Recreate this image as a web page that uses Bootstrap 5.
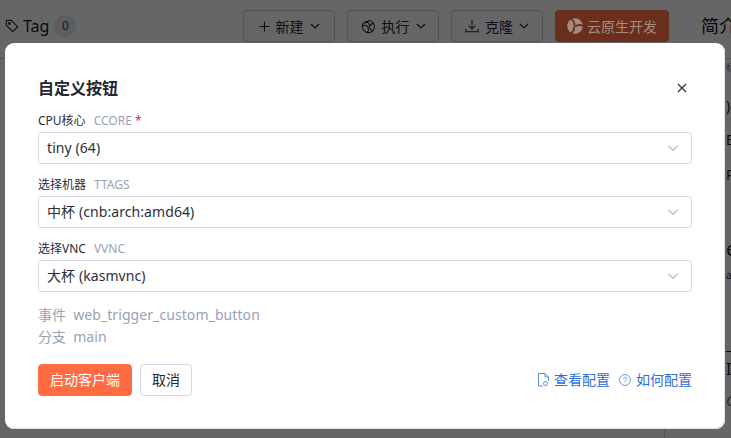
<!doctype html>
<html lang="zh"><head><meta charset="utf-8">
<link href="https://cdn.jsdelivr.net/npm/bootstrap@5.3.0/dist/css/bootstrap.min.css" rel="stylesheet">
<style>
html,body{height:100%;overflow:hidden}
body{font-family:"Noto Sans","Noto Sans CJK SC",sans-serif;background:#fff;color:#1f2328;width:731px;height:438px;position:relative}
.under{height:438px;position:relative;overflow:hidden}
.top-row{height:42px;padding:10px 0 0 5px}
.tag-title{font-size:16px;line-height:32px;color:#111827;width:238px;flex:none}
.tag-count{width:22px;height:22px;border-radius:50%;background:#e3e8f2;font-size:12px;color:#39435a;margin-left:5px}
.bg-btn{height:32px;width:92px;flex:none;font-size:14px;border:1px solid #c9cfdc;border-radius:4px;background:#fff;color:#1f2937;margin-right:12px;gap:6px;white-space:nowrap}
.bg-cloud{width:114px;background:#6a2e1c;border-color:#6a2e1c;color:#a58b80;position:relative;z-index:2;margin-right:0;gap:4px}
.side-h{font-size:18px;color:#111827;margin-left:32px;white-space:nowrap;flex:none}
.side-frags{position:absolute;left:726px;top:60px;width:5px;overflow:hidden;color:#222;font-size:14px}
.side-frags div{white-space:nowrap}
.frag-a{height:34px;font-size:9px;line-height:16px;color:#666}
.frag-b{height:34px;line-height:24px}
.frag-c{height:34px;line-height:24px}
.frag-d{height:72px;line-height:26px}
.frag-e{height:34px;font-size:20px;line-height:30px}
.frag-f{height:83px;font-size:10px;line-height:14px}
.frag-g{height:38px;border-top:1px solid #222;font-size:16px;line-height:20px;padding-top:7px}
.frag-h{height:24px;font-style:italic;color:#666;line-height:24px}
.rule{position:absolute;left:0;right:0;top:58px;border-top:1px solid #cfd5e2}
.vrule{position:absolute;left:664px;top:300px;bottom:0;border-left:1px solid #cfd5e2}
.shade{position:absolute;inset:0;background:rgba(0,0,0,.6);z-index:1}
.dlg{position:absolute;z-index:3;left:5px;top:43px;width:720px;height:386px;background:#fff;border-radius:9px;padding:33px 33px 0;box-shadow:inset -1px -1px 0 #dde1ea}
.dlg-title{font-size:16px;font-weight:600;line-height:24px;color:#23272f;margin:0 0 10px}
.closer{position:absolute;right:37px;top:39px;width:12px;height:12px;padding:0;border:0;background:none;display:flex}
.fld{margin-bottom:10px}
.fld-label{font-size:12px;line-height:22px;height:20px;color:#2a2f3a;margin-bottom:2px;display:block}
.fld-key{color:#9aa3b5;margin-left:8px}
.fld-req{color:#e0245e}
.fld-sel{height:32px;border:1px solid #d3d9e8;border-radius:4px;font-size:14px;letter-spacing:.08px;padding:0 8px;color:#2a2f3a;background:#fff}
.fld-sel span{margin-bottom:2px}
.meta{font-size:14px;line-height:22px;color:#98a2b6;margin-top:12px;letter-spacing:.08px}
.meta span{margin-right:7px}
.foot{margin-top:16px;height:32px}
.go{height:32px;width:94px;padding:0 0 2px;font-size:14px;background:#ff6b43;border:1px solid #ff6b43;color:#fff;border-radius:4px}
.no{height:32px;width:52px;padding:0 0 2px;font-size:14px;background:#fff;border:1px solid #d3d9e8;color:#23272f;border-radius:4px;margin-left:8px}
.lnk{font-size:14px;color:#2f6fd8;text-decoration:none;line-height:20px;gap:5px;margin-left:9px}
</style></head><body>
<div class="under">
  <div class="d-flex align-items-center top-row">
    <div class="tag-title d-flex align-items-center">
      <svg width="14" height="14" viewBox="0 0 16 16" fill="none" stroke="#1f2937" stroke-width="1.3" class="me-1"><path d="M1.500 2v5.200l7.300 7.300 5.700-5.700-7.300-7.300H2z"/><circle cx="5" cy="5.200" r="1"/></svg>
      Tag<span class="tag-count d-inline-flex align-items-center justify-content-center">0</span>
    </div>
    <div class="bg-btn d-flex align-items-center justify-content-center"><svg width="11" height="11" viewBox="0 0 11 11" fill="none" stroke="currentColor" stroke-width="1.200"><path d="M5.500 .5v10M.5 5.500h10"/></svg>新建<svg width="10" height="10" viewBox="0 0 10 10" fill="none" stroke="currentColor" stroke-width="1.200"><path d="M1 3l4 4 4-4"/></svg></div>
    <div class="bg-btn d-flex align-items-center justify-content-center">
      <svg width="15" height="15" viewBox="0 0 16 16" fill="none" stroke="currentColor" stroke-width="1.100"><path d="M8 1.500a6.500 6.500 0 1 1-5 2.300M4 2.500c3 0 5 2 5 5s2 5 4 5M2 7c3-1 6 1 6 4s-1 3-2 3.500M8 1.500c-1 2-3 3-5 2.300M9 7.500c1.500-1 3-2 3.500-3.500"/></svg>
      执行<svg width="10" height="10" viewBox="0 0 10 10" fill="none" stroke="currentColor" stroke-width="1.200"><path d="M1 3l4 4 4-4"/></svg></div>
    <div class="bg-btn d-flex align-items-center justify-content-center">
      <svg width="14" height="14" viewBox="0 0 16 16" fill="none" stroke="currentColor" stroke-width="1.200"><path d="M8 1v10M4 7.500l4 4 4-4M1 11v3.500h14V11"/></svg>
      克隆<svg width="10" height="10" viewBox="0 0 10 10" fill="none" stroke="currentColor" stroke-width="1.200"><path d="M1 3l4 4 4-4"/></svg></div>
    <div class="bg-btn bg-cloud d-flex align-items-center justify-content-center">
      <svg width="16" height="16" viewBox="0 0 16 16"><circle cx="8" cy="8" r="7.800" fill="#a58b80"/><path d="M7.500 7.500C7.500 4.500 6 2 3.500 1M8 8.500c2.500-1.500 5.500-2 7.800-.5M7 8.500c.5 3-1 5.500-3.500 7" stroke="#6a2e1c" stroke-width="1.800" fill="none"/></svg>
      云原生开发</div>
    <div class="side-h">简介</div>
  </div>
  <div class="rule"></div>
  <div class="vrule"></div>
  <div class="side-frags">
    <div class="frag-a">标</div><div class="frag-b">)</div><div class="frag-c">B</div><div class="frag-d">R</div><div class="frag-e">e</div><div class="frag-f">as</div><div class="frag-g">IP</div><div class="frag-h">C</div>
  </div>
  <div class="shade"></div>
  <div class="dlg">
    <h5 class="dlg-title">自定义按钮</h5>
    <button class="closer" type="button" aria-label="关闭"><svg width="12" height="12" viewBox="0 0 12 12" fill="none" stroke="#333" stroke-width="1.300"><path d="M2 2l8 8M10 2l-8 8"/></svg></button>
    <div class="fld">
      <label class="fld-label">CPU核心<span class="fld-key">CCORE</span> <span class="fld-req">*</span></label>
      <div class="fld-sel d-flex justify-content-between align-items-center"><span>tiny (64)</span><svg width="12" height="12" viewBox="0 0 12 12" fill="none" stroke="#b3b9c6" stroke-width="1.200" class="me-1"><path d="M1.500 4l4.500 4.500L10.500 4"/></svg></div>
    </div>
    <div class="fld">
      <label class="fld-label">选择机器<span class="fld-key">TTAGS</span></label>
      <div class="fld-sel d-flex justify-content-between align-items-center"><span>中杯 (cnb:arch:amd64)</span><svg width="12" height="12" viewBox="0 0 12 12" fill="none" stroke="#b3b9c6" stroke-width="1.200" class="me-1"><path d="M1.500 4l4.500 4.500L10.500 4"/></svg></div>
    </div>
    <div class="fld">
      <label class="fld-label">选择VNC<span class="fld-key">VVNC</span></label>
      <div class="fld-sel d-flex justify-content-between align-items-center"><span>大杯 (kasmvnc)</span><svg width="12" height="12" viewBox="0 0 12 12" fill="none" stroke="#b3b9c6" stroke-width="1.200" class="me-1"><path d="M1.500 4l4.500 4.500L10.500 4"/></svg></div>
    </div>
    <div class="meta"><div><span>事件</span>web_trigger_custom_button</div><div><span>分支</span>main</div></div>
    <div class="foot d-flex align-items-center">
      <button class="go" type="button">启动客户端</button>
      <button class="no" type="button">取消</button>
      <div class="ms-auto d-flex align-items-center">
        <a class="lnk d-flex align-items-center" href="#"><svg width="11" height="14" viewBox="0 0 11 14" fill="none" stroke="#5b8fe0" stroke-width="1"><path d="M5 13H.5V.5H7L10.500 4v4M7 .5V4h3.500"/><circle cx="7.500" cy="10.500" r="2"/></svg>查看配置</a>
        <a class="lnk d-flex align-items-center" href="#"><svg width="12" height="12" viewBox="0 0 13 13" fill="none" stroke="#5b8fe0" stroke-width="1"><circle cx="6.500" cy="6.500" r="5.900"/><path d="M4.800 5.200c0-2.200 3.500-2.200 3.500 0 0 1.300-1.800 1.300-1.800 2.800M6.500 9.200v.8"/></svg>如何配置</a>
      </div>
    </div>
  </div>
</div>
<script src="https://cdn.jsdelivr.net/npm/bootstrap@5.3.0/dist/js/bootstrap.bundle.min.js"></script>
</body></html>
